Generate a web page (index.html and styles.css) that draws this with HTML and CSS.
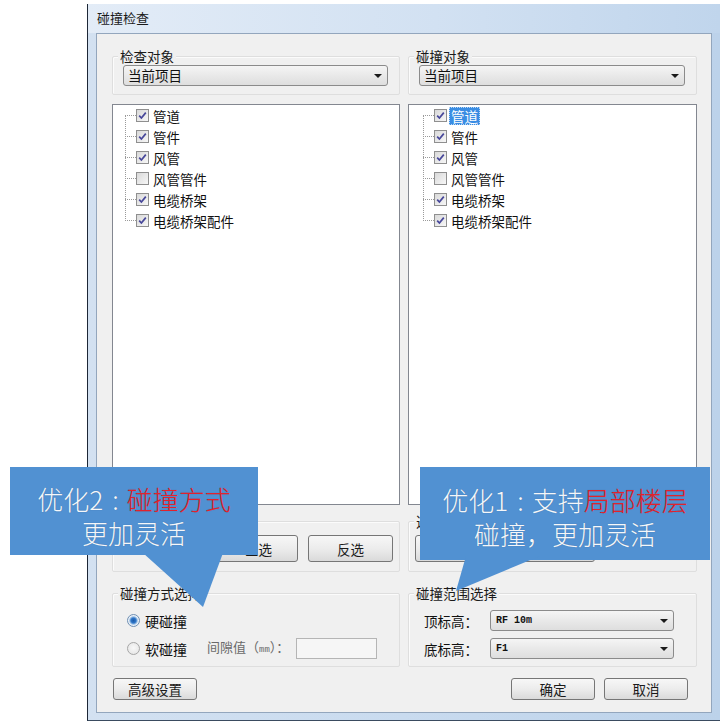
FILE: index.html
```html
<!DOCTYPE html>
<html lang="zh">
<head>
<meta charset="utf-8">
<title>碰撞检查</title>
<link rel="stylesheet" href="styles.css">
</head>
<body>
<div class="window">
  <div class="titlebar">碰撞检查</div>
  <div class="client">
    <div class="col col-left">
      <div class="group group-top">
        <div class="legend">检查对象</div>
        <div class="combo combo-lg"><span>当前项目</span><i class="arrow"></i></div>
      </div>
      <div class="tree">
        <div class="items">
          <div class="row"><span class="branch"></span><span class="cb"><svg viewBox="0 0 11 11"><path d="M2.2 5.6 L4.4 8 L8.8 2.6"/></svg></span><span class="label">管道</span></div>
          <div class="row"><span class="branch"></span><span class="cb"><svg viewBox="0 0 11 11"><path d="M2.2 5.6 L4.4 8 L8.8 2.6"/></svg></span><span class="label">管件</span></div>
          <div class="row"><span class="branch"></span><span class="cb"><svg viewBox="0 0 11 11"><path d="M2.2 5.6 L4.4 8 L8.8 2.6"/></svg></span><span class="label">风管</span></div>
          <div class="row"><span class="branch"></span><span class="cb"></span><span class="label">风管管件</span></div>
          <div class="row"><span class="branch"></span><span class="cb"><svg viewBox="0 0 11 11"><path d="M2.2 5.6 L4.4 8 L8.8 2.6"/></svg></span><span class="label">电缆桥架</span></div>
          <div class="row"><span class="branch"></span><span class="cb"><svg viewBox="0 0 11 11"><path d="M2.2 5.6 L4.4 8 L8.8 2.6"/></svg></span><span class="label">电缆桥架配件</span></div>
        </div>
      </div>
      <div class="group group-btns">
        <div class="legend legend-empty"></div>
        <div class="btns btns-end"><button class="btn btn-lg btn-shift">全选</button><button class="btn btn-lg">反选</button></div>
      </div>
      <div class="group group-bottom">
        <div class="legend">碰撞方式选择</div>
        <div class="field field-first"><span class="radio radio-on"></span><span class="rlabel">硬碰撞</span></div>
        <div class="field"><span class="radio"></span><span class="rlabel">软碰撞</span><span class="hint">间隙值（<span class="mm">mm</span>）：</span><span class="input"></span></div>
      </div>
      <div class="footer"><button class="btn">高级设置</button></div>
    </div>
    <div class="col col-right">
      <div class="group group-top">
        <div class="legend">碰撞对象</div>
        <div class="combo combo-lg"><span>当前项目</span><i class="arrow"></i></div>
      </div>
      <div class="tree tree-right">
        <div class="items">
          <div class="row"><span class="branch"></span><span class="cb"><svg viewBox="0 0 11 11"><path d="M2.2 5.6 L4.4 8 L8.8 2.6"/></svg></span><span class="label label-sel">管道</span></div>
          <div class="row"><span class="branch"></span><span class="cb"><svg viewBox="0 0 11 11"><path d="M2.2 5.6 L4.4 8 L8.8 2.6"/></svg></span><span class="label">管件</span></div>
          <div class="row"><span class="branch"></span><span class="cb"><svg viewBox="0 0 11 11"><path d="M2.2 5.6 L4.4 8 L8.8 2.6"/></svg></span><span class="label">风管</span></div>
          <div class="row"><span class="branch"></span><span class="cb"></span><span class="label">风管管件</span></div>
          <div class="row"><span class="branch"></span><span class="cb"><svg viewBox="0 0 11 11"><path d="M2.2 5.6 L4.4 8 L8.8 2.6"/></svg></span><span class="label">电缆桥架</span></div>
          <div class="row"><span class="branch"></span><span class="cb"><svg viewBox="0 0 11 11"><path d="M2.2 5.6 L4.4 8 L8.8 2.6"/></svg></span><span class="label">电缆桥架配件</span></div>
        </div>
      </div>
      <div class="group group-btns">
        <div class="legend">选</div>
        <div class="btns btns-start"><button class="btn btn-lg"></button><button class="btn btn-lg"></button></div>
      </div>
      <div class="group group-bottom">
        <div class="legend">碰撞范围选择</div>
        <div class="field field-first"><span class="flabel">顶标高：</span><div class="combo combo-sm"><span>RF 10m</span><i class="arrow"></i></div></div>
        <div class="field"><span class="flabel">底标高：</span><div class="combo combo-sm"><span>F1</span><i class="arrow"></i></div></div>
      </div>
      <div class="footer footer-end"><button class="btn">确定</button><button class="btn">取消</button></div>
    </div>
  </div>
</div>

<div class="callout callout-left">
  <div class="cline">优化2<span class="colon">:</span><span class="red">碰撞方式</span></div>
  <div class="cline">更加灵活</div>
  <svg class="tail" width="248" height="145" viewBox="0 0 248 145"><polygon points="133,86 213,86 193,140"/></svg>
</div>
<div class="callout callout-right">
  <div class="cline">优化1<span class="colon">:</span>支持<span class="red">局部楼层</span></div>
  <div class="cline">碰撞，更加灵活</div>
  <svg class="tail" width="290" height="130" viewBox="0 0 290 130"><polygon points="46,89 120,89 36,124"/></svg>
</div>
</body>
</html>
```

FILE: styles.css
```css
html, body {
  margin: 0;
  padding: 0;
  background: #ffffff;
  overflow: hidden;
}
body {
  width: 723px;
  height: 722px;
  font-family: "Noto Sans CJK SC", "Noto Sans", sans-serif;
  color: #111;
}
.window {
  box-sizing: border-box;
  margin: 4px 0 0 87px;
  width: 633px;
  height: 717px;
  border-left: 1px solid #1d2736;
  border-bottom: 1px solid #3a4b60;
  padding: 0 8px 7px 8px;
  background: linear-gradient(to right, #d3e1f1 0%, #c9dbef 50%, #bcd2ea 100%);
  display: flex;
  flex-direction: column;
}
.titlebar {
  height: 29px;
  line-height: 27px;
  font-size: 13px;
  color: #1a1a1a;
  background: linear-gradient(to right, #e3ecf7 0%, #d2e1f2 55%, #c0d5ec 100%);
  margin: 0 -8px;
  padding-left: 9px;
}
.client {
  flex: 1;
  box-sizing: border-box;
  border: 1px solid #93a6bd;
  background: #f0f0f0;
  padding: 22px 14px 0 15px;
  display: grid;
  grid-template-columns: 288px 289px;
  column-gap: 8px;
  align-items: start;
}
.col {
  display: flex;
  flex-direction: column;
}
.group {
  border: 1px solid #dedede;
  box-shadow: inset 1px 1px 0 #fbfbfb;
  border-radius: 2px;
}
.legend {
  width: max-content;
  margin: -9px 0 0 5px;
  padding: 0 2px;
  height: 16px;
  line-height: 16px;
  font-size: 13.5px;
  color: #1a1a1a;
  background: #f0f0f0;
}
.legend-empty {
  background: transparent;
}
.group-top {
  padding: 0 11px 8px 10px;
}
.group-top .legend {
  margin-left: -5px;
}
.group-top .combo {
  margin-top: 1px;
}
.combo {
  box-sizing: border-box;
  display: flex;
  align-items: center;
  justify-content: space-between;
  border: 1px solid #8b8b8b;
  border-radius: 3px;
  background: linear-gradient(#f5f5f5, #e9e9e9 50%, #dedede);
  padding: 0 4px 0 4px;
}
.combo-lg {
  height: 21px;
  font-size: 13.5px;
  line-height: 19px;
  color: #111;
}
.combo-sm {
  width: 184px;
  height: 21px;
  font-family: "Liberation Mono", monospace;
  font-size: 10px;
  font-weight: bold;
  color: #111;
  padding-left: 5px;
}
.arrow {
  width: 0;
  height: 0;
  border-left: 4px solid transparent;
  border-right: 4px solid transparent;
  border-top: 4px solid #1a1a1a;
  margin-right: 1px;
}
.tree {
  margin-top: 9px;
  box-sizing: border-box;
  height: 401px;
  border: 1px solid #838790;
  background: #ffffff;
  padding-left: 12px;
}
.tree-right {
  padding-left: 14px;
}
.items {
  position: relative;
}
.items::before {
  content: "";
  position: absolute;
  left: 0;
  top: 10px;
  bottom: 10px;
  border-left: 1px dotted #9a9a9a;
}
.row {
  height: 21px;
  display: flex;
  align-items: center;
}
.branch {
  width: 11px;
  border-top: 1px dotted #9a9a9a;
}
.cb {
  box-sizing: border-box;
  width: 13px;
  height: 13px;
  border: 1px solid #8f8f8f;
  background: linear-gradient(135deg, #d9d9d9, #f7f7f7);
  display: flex;
}
.cb svg {
  width: 11px;
  height: 11px;
  fill: none;
  stroke: #47479a;
  stroke-width: 1.7;
}
.label {
  margin-left: 4px;
  font-size: 13.5px;
  line-height: 18px;
  color: #111;
}
.label-sel {
  margin-left: 2px;
  padding: 0 2px;
  background: #3a8de3;
  color: #fff;
  outline: 1px dotted #bcd8f5;
  outline-offset: -1px;
}
.group-btns {
  margin-top: 16px;
  padding-bottom: 9px;
}
.btns {
  display: flex;
  gap: 10px;
  margin-top: 6px;
}
.btns-end {
  justify-content: flex-end;
  padding-right: 6px;
}
.btns-start {
  justify-content: flex-start;
  padding-left: 6px;
}
.btn {
  box-sizing: border-box;
  width: 84px;
  height: 22px;
  border: 1px solid #767676;
  border-radius: 3px;
  background: linear-gradient(#f7f7f7, #ececec 50%, #dadada);
  font-family: "Noto Sans CJK SC", sans-serif;
  font-size: 13.5px;
  line-height: 18px;
  color: #1a1a1a;
  padding: 0;
}
.btn-lg {
  width: 85px;
  height: 27px;
}
.btn-shift {
  padding-left: 6px;
}
.group-bottom {
  margin-top: 21px;
  padding-bottom: 7px;
}
.field {
  height: 21px;
  display: flex;
  align-items: center;
  margin-top: 7px;
}
.field-first {
  margin-top: 9px;
}
.radio {
  box-sizing: border-box;
  width: 13px;
  height: 13px;
  border-radius: 50%;
  margin-left: 14px;
  border: 1px solid #a6a6a6;
  background: radial-gradient(circle at 50% 45%, #f8f8f8 0, #e2e2e2 100%);
}
.radio-on {
  border-color: #6f8fb3;
  background: radial-gradient(circle at 50% 50%, #1c5aa8 0, #2f76c8 2.5px, #9cc0e6 3.8px, #eef3f8 4.8px, #dfe6ee 100%);
}
.rlabel {
  margin-left: 5px;
  font-size: 14px;
  line-height: 18px;
  color: #111;
}
.hint {
  margin-left: 20px;
  font-size: 13px;
  color: #6a6a6a;
  line-height: 18px;
}
.mm {
  font-family: "Liberation Mono", monospace;
  font-size: 9px;
}
.input {
  box-sizing: border-box;
  width: 81px;
  height: 21px;
  margin-left: 7px;
  border: 1px solid #b5b5b5;
  background: #f6f6f6;
}
.flabel {
  margin-left: 15px;
  width: 66px;
  font-size: 13.5px;
  line-height: 18px;
  color: #111;
}
.footer {
  margin-top: 11px;
  display: flex;
  padding-left: 1px;
}
.footer-end {
  justify-content: flex-end;
  gap: 9px;
  padding-right: 9px;
}
.callout {
  position: absolute;
  box-sizing: border-box;
  background: #5191d2;
  color: #f5f7fa;
  font-family: "Noto Sans CJK SC", sans-serif;
  font-weight: 300;
  font-size: 26px;
  line-height: 34px;
  text-align: center;
  text-shadow: 0 0 1px rgba(0, 0, 0, 0.25);
  z-index: 5;
}
.callout-left {
  left: 10px;
  top: 467px;
  width: 248px;
  height: 88px;
  padding-top: 15px;
}
.callout-right {
  left: 420px;
  top: 467px;
  width: 290px;
  height: 93px;
  padding-top: 16px;
}
.cline {
  white-space: nowrap;
}
.colon {
  display: inline-block;
  margin: 0 8px 0 9px;
}
.red {
  color: #e2222c;
}
.tail {
  position: absolute;
  left: 0;
  top: 0;
  overflow: visible;
  z-index: -1;
}
.tail polygon {
  fill: #5191d2;
}
```
